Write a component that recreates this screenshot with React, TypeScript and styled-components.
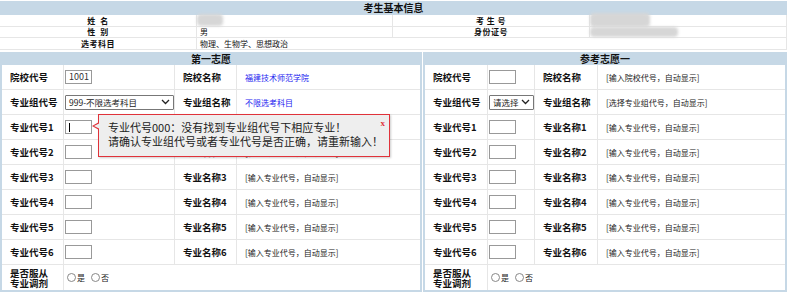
import React from 'react'
import styled, { createGlobalStyle } from 'styled-components'

const GlobalStyle = createGlobalStyle`
  html, body {
    margin: 0;
    padding: 0;
    background: #fff;
  }
`

const BLUE = '#c6d8e6'
const LINE = '#e6e6e6'

const Page = styled.div`
  position: relative;
  width: 787px;
  height: 293px;
  overflow: hidden;
  background: #fff;
  font-family: "Noto Sans CJK SC", "Noto Sans", sans-serif;
  color: #111;
`
const InfoHeader = styled.div`
  height: 14px;
  margin-top: 1px;
  background: ${BLUE};
  text-align: center;
  font-size: 10px;
  font-weight: bold;
  line-height: 14px;
`
const InfoRow = styled.div<{ $h: number }>`
  display: grid;
  grid-template-columns: 197px 196px 197px 197px;
  height: ${({ $h }) => $h}px;
  border-bottom: 1px solid ${LINE};
  font-size: 8px;
  line-height: ${({ $h }) => $h}px;
`
const InfoLabel = styled.div`
  text-align: center;
  font-weight: bold;
  border-right: 1px solid ${LINE};
  letter-spacing: 0.5px;
`
const InfoValue = styled.div<{ $span?: number }>`
  position: relative;
  padding-left: 3px;
  border-right: 1px solid ${LINE};
  grid-column: span ${({ $span }) => $span || 1};
`
const Blur = styled.span<{ $w: number; $h: number; $t: number }>`
  position: absolute;
  left: 0;
  top: ${({ $t }) => $t}px;
  width: ${({ $w }) => $w}px;
  height: ${({ $h }) => $h}px;
  background: #d6d6d6;
  border-radius: 4px;
  filter: blur(1.5px);
`

const Panels = styled.div`
  display: flex;
  gap: 1px;
  margin-top: 2px;
`
const Panel = styled.div<{ $w: number }>`
  width: ${({ $w }) => $w}px;
  border: 2px solid ${BLUE};
  border-top: none;
  box-sizing: border-box;
`
const PanelHeader = styled.div`
  height: 13px;
  background: ${BLUE};
  text-align: center;
  font-size: 10px;
  font-weight: bold;
  line-height: 13px;
`
const Row = styled.div<{ $cols: string; $last?: boolean }>`
  display: grid;
  grid-template-columns: ${({ $cols }) => $cols};
  height: 25px;
  border-bottom: ${({ $last }) => ($last ? 'none' : `1px solid ${LINE}`)};
  box-sizing: border-box;
`
const Label = styled.div`
  display: flex;
  align-items: center;
  padding-left: 8px;
  font-size: 9.5px;
  font-weight: bold;
  line-height: 10px;
  border-right: 1px solid ${LINE};
  white-space: pre-line;
`
const Cell = styled.div<{ $span?: number; $blue?: boolean; $open?: boolean }>`
  position: relative;
  display: flex;
  align-items: center;
  gap: 4px;
  padding-left: ${({ $blue }) => ($blue ? 8 : 1)}px;
  grid-column: span ${({ $span }) => $span || 1};
  border-right: ${({ $open }) => ($open ? 'none' : `1px solid ${LINE}`)};
  font-size: 8px;
  color: ${({ $blue }) => ($blue ? '#1c1cf0' : '#222')};
`
const Value = styled.div`
  display: flex;
  align-items: center;
  padding-left: 8px;
  font-size: 8px;
  color: #222;
`
const Box = styled.div`
  width: 27px;
  height: 14px;
  border: 1px solid #999;
  box-sizing: border-box;
  font-size: 9px;
  line-height: 12px;
  padding-left: 3px;
  color: #333;
  background: #fff;
`
const Caret = styled.span`
  display: inline-block;
  width: 1px;
  height: 9px;
  margin-top: 2px;
  background: #000;
`
const FakeSelect = styled.div<{ $w: number }>`
  width: ${({ $w }) => $w}px;
  height: 15px;
  border: 1px solid #777;
  border-radius: 1px;
  box-sizing: border-box;
  display: flex;
  align-items: center;
  justify-content: space-between;
  padding: 0 3px 0 3px;
  font-size: 8.5px;
  color: #222;
`
const Radio = styled.span`
  display: inline-flex;
  align-items: center;
  gap: 1px;
  margin-left: 2px;
  font-size: 8px;
  &::before {
    content: '';
    width: 7px;
    height: 7px;
    border: 1px solid #888;
    border-radius: 50%;
  }
`
const Popup = styled.div`
  position: absolute;
  left: 98px;
  top: 114px;
  width: 292px;
  height: 43px;
  box-sizing: border-box;
  border: 1px solid #e0323a;
  background: #eeeeee;
  box-shadow: 1px 1px 2px rgba(0, 0, 0, 0.2);
  padding: 5px 0 0 9px;
  font-size: 11px;
  line-height: 14px;
  color: #222;
  &::before {
    content: '';
    position: absolute;
    left: -7px;
    top: 7px;
    border-right: 7px solid #e0323a;
    border-top: 4px solid transparent;
    border-bottom: 4px solid transparent;
  }
  &::after {
    content: '';
    position: absolute;
    left: -5px;
    top: 8px;
    border-right: 6px solid #eeeeee;
    border-top: 3px solid transparent;
    border-bottom: 3px solid transparent;
  }
`
const Close = styled.span`
  position: absolute;
  right: 4px;
  top: 1px;
  color: #e0323a;
  font-size: 9px;
  font-weight: bold;
  font-family: "Liberation Serif", serif;
`

const Chevron = () => (
  <svg width="9" height="6" viewBox="0 0 9 6">
    <path d="M1 1l3.5 3.5L8 1" fill="none" stroke="#222" strokeWidth="1.3" />
  </svg>
)

const LEFT_COLS = '62px 111px 62px 1fr'
const RIGHT_COLS = '63px 47px 63px 1fr'
const HINT = '[输入专业代号，自动显示]'

interface PanelProps {
  title: string
  cols: string
  width: number
  first?: boolean
}

const WishPanel: React.FC<PanelProps> = ({ title, cols, width, first }) => (
  <Panel $w={width}>
    <PanelHeader>{title}</PanelHeader>
    <Row $cols={cols}>
      <Label>院校代号</Label>
      <Cell><Box>{first ? '1001' : ''}</Box></Cell>
      <Label>院校名称</Label>
      {first ? <Cell $blue $open>福建技术师范学院</Cell> : <Value>[输入院校代号，自动显示]</Value>}
    </Row>
    <Row $cols={cols}>
      <Label>专业组代号</Label>
      <Cell>
        <FakeSelect $w={first ? 109 : 45}>
          <span>{first ? '999-不限选考科目' : '请选择'}</span>
          <Chevron />
        </FakeSelect>
      </Cell>
      <Label>专业组名称</Label>
      {first ? <Cell $blue $open>不限选考科目</Cell> : <Value>[选择专业组代号，自动显示]</Value>}
    </Row>
    {[1, 2, 3, 4, 5, 6].map((n) => (
      <Row $cols={cols} key={n}>
        <Label>专业代号{n}</Label>
        <Cell><Box>{first && n === 1 ? <Caret /> : null}</Box></Cell>
        <Label>专业名称{n}</Label>
        <Value>{HINT}</Value>
      </Row>
    ))}
    <Row $cols={cols} $last>
      <Label>{'是否服从\n专业调剂'}</Label>
      <Cell $span={3} $open>
        <Radio>是</Radio>
        <Radio>否</Radio>
      </Cell>
    </Row>
  </Panel>
)

export default function App() {
  return (
    <Page>
      <GlobalStyle />
      <InfoHeader>考生基本信息</InfoHeader>
      <InfoRow $h={11}>
        <InfoLabel>姓&nbsp;&nbsp;名</InfoLabel>
        <InfoValue><Blur $w={26} $h={12} $t={-1} /></InfoValue>
        <InfoLabel>考 生 号</InfoLabel>
        <InfoValue><Blur $w={60} $h={14} $t={-2} /></InfoValue>
      </InfoRow>
      <InfoRow $h={10}>
        <InfoLabel>性&nbsp;&nbsp;别</InfoLabel>
        <InfoValue>男</InfoValue>
        <InfoLabel>身份证号</InfoLabel>
        <InfoValue><Blur $w={88} $h={10} $t={0} /></InfoValue>
      </InfoRow>
      <InfoRow $h={11}>
        <InfoLabel>选考科目</InfoLabel>
        <InfoValue $span={3}>物理、生物学、思想政治</InfoValue>
      </InfoRow>
      <Panels>
        <WishPanel title="第一志愿" cols={LEFT_COLS} width={422} first />
        <WishPanel title="参考志愿一" cols={RIGHT_COLS} width={364} />
      </Panels>
      <Popup>
        专业代号000：没有找到专业组代号下相应专业！
        <br />
        请确认专业组代号或者专业代号是否正确，请重新输入！
        <Close>x</Close>
      </Popup>
    </Page>
  )
}
